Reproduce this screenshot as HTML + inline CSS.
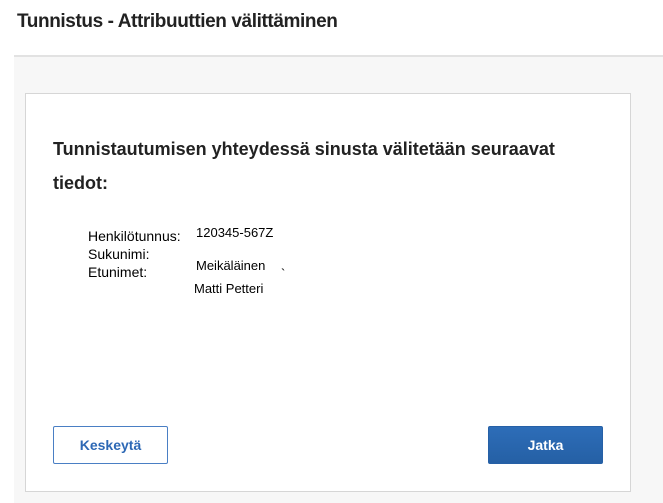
<!DOCTYPE html>
<html><head><meta charset="utf-8"><style>
*{margin:0;padding:0;box-sizing:border-box}
body{width:663px;height:503px;background:#fff;position:relative;font-family:"Liberation Sans",sans-serif;overflow:hidden}
.t{position:absolute;left:17px;top:11px;font-size:19px;font-weight:bold;color:#222;letter-spacing:-0.4px}
.line{position:absolute;left:14px;right:0;top:55px;height:2px;background:#e2e2e2}
.bg{position:absolute;left:14px;right:0;top:57px;bottom:0;background:#f7f7f7}
.card{position:absolute;left:25px;top:93px;width:606px;height:399px;background:#fff;border:1px solid #d6d6d6}
.h{position:absolute;left:53px;top:132px;font-size:18px;font-weight:bold;color:#222;line-height:34px;width:520px}
.a{position:absolute;font-size:14px;color:#000}
.b{position:absolute;top:426px;width:115px;height:38px;border-radius:2px;font-size:14px;font-weight:bold;text-align:center;line-height:36px}
</style></head><body>
<div class="t">Tunnistus - Attribuuttien välittäminen</div>
<div class="line"></div><div class="bg"></div><div class="card"></div>
<div class="h">Tunnistautumisen yhteydessä sinusta välitetään seuraavat tiedot:</div>
<div class="a" style="left:88px;top:228px">Henkilötunnus:</div>
<div class="a" style="left:88px;top:246px">Sukunimi:</div>
<div class="a" style="left:88px;top:264px">Etunimet:</div>
<div class="a" style="left:196px;top:225px;font-size:13px">120345-567Z</div>
<div class="a" style="left:196px;top:258px;font-size:13px">Meikäläinen</div>
<div class="a" style="left:281px;top:266px;font-size:13px">`</div>
<div class="a" style="left:194px;top:281px;font-size:13px">Matti Petteri</div>
<div class="b" style="left:53px;border:1px solid #4a7fc4;color:#2d68b5;background:#fff">Keskeytä</div>
<div class="b" style="left:488px;background:linear-gradient(#2d6db8,#2560a5);color:#fff;border:1px solid #2660a6">Jatka</div>
</body></html>
